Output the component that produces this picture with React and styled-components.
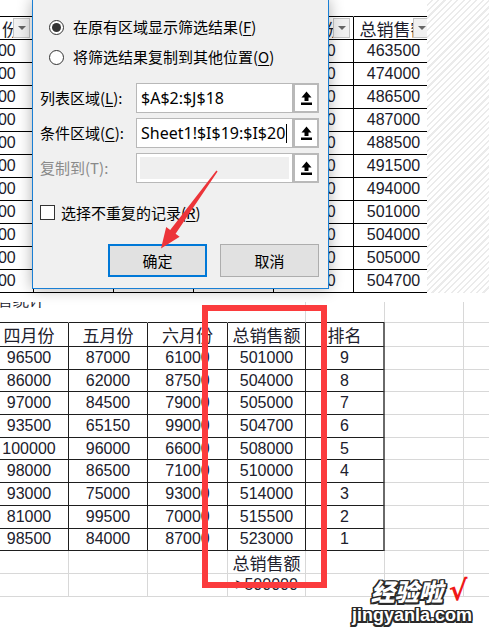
import React from "react";
import styled, { createGlobalStyle } from "styled-components";

const GlobalStyle = createGlobalStyle`
  *, *::before, *::after { box-sizing: border-box; }
  html, body { margin: 0; padding: 0; background: #fff; }
  body {
    font-family: "Liberation Sans", "Noto Sans CJK SC", sans-serif;
    overflow: hidden;
  }
`;

const DARK = "#1e1e1e";
const LIGHT = "#d8d8d8";

const Page = styled.div`
  position: relative;
  width: 489px;
  height: 631px;
  overflow: hidden;
  background: #fff;
`;

/* ---------- upper screenshot: sheet + advanced filter dialog ---------- */

const TopShot = styled.div`
  position: relative;
  display: flex;
  height: 293px;
`;

const SheetClip = styled.div`
  width: 427px;
  flex-shrink: 0;
  overflow: hidden;
`;

const TopGrid = styled.div`
  display: grid;
  grid-template-columns: repeat(6, 80px);
  grid-template-rows: 17px repeat(12, 23px);
  width: 480px;
  margin-left: -46px;
`;

const TopCell = styled.div`
  position: relative;
  display: flex;
  align-items: center;
  justify-content: center;
  border-bottom: 1px solid #000;
  border-right: 1px solid ${(p) => (p.$blank ? "transparent" : "#000")};
  font-size: ${(p) => (p.$cjk ? "17px" : "16px")};
  font-family: ${(p) =>
    p.$cjk ? '"Noto Sans CJK SC", sans-serif' : '"Liberation Sans", sans-serif'};
  color: #1a1a2a;
  white-space: nowrap;
`;

const FilterBtn = styled.span`
  position: absolute;
  right: 3px;
  top: 1px;
  width: 17px;
  height: 20px;
  background: #f1f1f1;
  border: 1px solid #c4c4c4;
  display: flex;
  align-items: center;
  justify-content: center;
  &::after {
    content: "";
    border-left: 4px solid transparent;
    border-right: 4px solid transparent;
    border-top: 4px solid #666;
  }
`;

const Hatch = styled.div`
  flex: 1;
  background: repeating-linear-gradient(
    135deg,
    #ffffff 0px,
    #ffffff 3px,
    #ebebeb 3px,
    #ebebeb 4.5px
  );
`;

const Dialog = styled.div`
  position: absolute;
  left: 32px;
  top: 0;
  width: 297px;
  height: 289px;
  display: flex;
  flex-direction: column;
  padding: 12px 9px 0 7px;
  background: #f0f0f0;
  border: 1px solid #1a7fd4;
  border-top: none;
  box-shadow: 0 0 14px rgba(0, 0, 0, 0.32);
  font-family: "Noto Sans CJK SC", sans-serif;
  font-size: 15px;
  color: #000;
`;

const Options = styled.div`
  display: flex;
  flex-direction: column;
  padding-left: 9px;
`;

const OptionRow = styled.div`
  display: flex;
  align-items: center;
  gap: 9px;
  height: 30px;
  line-height: 20px;
`;

const Radio = styled.span`
  width: 15px;
  height: 15px;
  border-radius: 50%;
  border: 1px solid #333;
  background: #fff;
  display: flex;
  align-items: center;
  justify-content: center;
  &::after {
    content: "";
    width: 9px;
    height: 9px;
    border-radius: 50%;
    background: ${(p) => (p.$on ? "#333" : "transparent")};
  }
`;

const Key = styled.span`
  text-decoration: underline;
  text-underline-offset: 2px;
`;

const Fields = styled.div`
  display: flex;
  flex-direction: column;
  gap: 5px;
  margin-top: 11px;
`;

const FieldRow = styled.div`
  display: flex;
  align-items: stretch;
  height: 30px;
`;

const FieldLabel = styled.div`
  width: 96px;
  display: flex;
  align-items: center;
  line-height: 20px;
  color: ${(p) => (p.$off ? "#8a8a8a" : "#000")};
`;

const Input = styled.div`
  flex: 1;
  display: flex;
  align-items: center;
  padding-left: 4px;
  border: 1px solid #b8b8b8;
  background: ${(p) => (p.$off ? "#efefef" : "#fff")};
  box-shadow: ${(p) => (p.$off ? "inset 0 0 0 3px #fff" : "none")};
  font-family: "Noto Sans", sans-serif;
  font-size: 16px;
  line-height: 20px;
  white-space: nowrap;
`;

const Caret = styled.span`
  width: 1px;
  height: 19px;
  margin-left: 1px;
  background: #000;
`;

const Picker = styled.div`
  width: 26px;
  display: flex;
  align-items: center;
  justify-content: center;
  background: #fff;
  border: 2px solid #b9b9b9;
`;

const CheckRow = styled.div`
  display: flex;
  align-items: center;
  gap: 6px;
  height: 15px;
  margin-top: 22px;
  line-height: 15px;
`;

const CheckBox = styled.span`
  width: 15px;
  height: 15px;
  border: 1px solid #333;
  background: #fff;
`;

const Buttons = styled.div`
  display: flex;
  justify-content: flex-end;
  gap: 13px;
  margin-top: 24px;
`;

const Button = styled.div`
  width: 99px;
  height: 33px;
  display: flex;
  align-items: center;
  justify-content: center;
  background: #e1e1e1;
  border: ${(p) => (p.$primary ? "2px solid #0078d7" : "1px solid #adadad")};
`;

const ArrowLayer = styled.svg`
  position: absolute;
  left: 0;
  top: 0;
  pointer-events: none;
`;

/* ---------- lower screenshot: result table ---------- */

const BottomShot = styled.div`
  padding-top: 9px;
`;

const BottomGrid = styled.div`
  display: grid;
  grid-template-columns: 79px 79px 80px 78px 79px 79px 79px;
  grid-template-rows: 21px 24px repeat(11, 22.7px);
  margin-left: -10px;
`;

const Cell = styled.div`
  display: flex;
  align-items: center;
  justify-content: center;
  border-bottom: 1px solid ${(p) => p.$b};
  border-right: ${(p) => p.$rw || 1}px solid ${(p) => p.$r};
  font-size: ${(p) => (p.$cjk ? "17px" : "16px")};
  font-family: ${(p) =>
    p.$cjk ? '"Noto Sans CJK SC", sans-serif' : '"Liberation Sans", sans-serif'};
  color: #20202c;
  white-space: nowrap;
  overflow: hidden;
`;

const TitleCell = styled(Cell)`
  align-items: flex-start;
  justify-content: flex-start;
  overflow: hidden;
  font-size: 16px;
`;

const TitleText = styled.span`
  line-height: 16px;
  margin-top: -9px;
  margin-left: -9px;
`;

const RedFrame = styled.div`
  position: absolute;
  left: 202px;
  top: 305px;
  width: 125px;
  height: 283px;
  border: 6px solid #fb3b3d;
  pointer-events: none;
`;

const Watermark = styled.div`
  position: absolute;
  left: 348px;
  top: 577px;
  width: 128px;
  display: flex;
  flex-direction: column;
  align-items: center;
`;

const outline =
  "-1.5px -1.5px 0 #2a2a2a, 1.5px -1.5px 0 #2a2a2a, -1.5px 1.5px 0 #2a2a2a, 1.5px 1.5px 0 #2a2a2a, 0 1.5px 0 #2a2a2a, 0 -1.5px 0 #2a2a2a, 1.5px 0 0 #2a2a2a, -1.5px 0 0 #2a2a2a";

const WmTop = styled.div`
  display: flex;
  align-items: center;
  gap: 6px;
  margin-left: 14px;
`;

const WmTitle = styled.span`
  font-family: "Noto Sans CJK SC", sans-serif;
  font-weight: 900;
  font-style: italic;
  font-size: 24px;
  line-height: 28px;
  color: #fff;
  text-shadow: ${outline};
`;

const WmCheck = styled.span`
  font-family: "DejaVu Sans", sans-serif;
  font-weight: bold;
  font-size: 28px;
  line-height: 28px;
  color: #f01818;
`;

const WmSite = styled.span`
  font-family: "Liberation Sans", sans-serif;
  font-weight: bold;
  font-size: 18px;
  line-height: 20px;
  color: #fff;
  text-shadow: ${outline};
`;

/* ---------- data ---------- */

const topHead = ["二月份", "三月份", "四月份", "五月份", "六月份", "总销售额"];
const topRows = [
  [78500, 91000, 80500, 72000, 63000, 463500],
  [82000, 76500, 85000, 69500, 81000, 474000],
  [90500, 88000, 74000, 91000, 65000, 486500],
  [86500, 79000, 92500, 63000, 84000, 487000],
  [75000, 93500, 81000, 88500, 72500, 488500],
  [92000, 84000, 76500, 90000, 68000, 491500],
  [83000, 87500, 89000, 77500, 79000, 494000],
  [96500, 82000, 96500, 87000, 61000, 501000],
  [86000, 95000, 86000, 62000, 87500, 504000],
  [97000, 78500, 97000, 84500, 79000, 505000],
  [93500, 80000, 93500, 65150, 99000, 504700],
];

const bottomHead = ["四月份", "五月份", "六月份", "总销售额", "排名"];
const bottomRows = [
  [96500, 87000, 61000, 501000, 9],
  [86000, 62000, 87500, 504000, 8],
  [97000, 84500, 79000, 505000, 7],
  [93500, 65150, 99000, 504700, 6],
  [100000, 96000, 66000, 508000, 5],
  [98000, 86500, 71000, 510000, 4],
  [93000, 75000, 93000, 514000, 3],
  [81000, 99500, 70000, 515500, 2],
  [98500, 84000, 87000, 523000, 1],
];

function borders(r, c) {
  if (r === 0) return { $b: c <= 4 ? DARK : LIGHT, $r: c >= 3 ? LIGHT : "transparent" };
  if (r <= 10)
    return {
      $b: c <= 4 ? DARK : LIGHT,
      $r: c <= 3 ? DARK : c === 4 ? "#6a6a6a" : LIGHT,
      $rw: c === 4 ? 2 : 1,
    };
  return { $b: LIGHT, $r: LIGHT };
}

function bottomText(r, c) {
  if (r === 1) return bottomHead[c] || "";
  if (r >= 2 && r <= 10) return bottomRows[r - 2][c] ?? "";
  if (r === 11 && c === 3) return "总销售额";
  if (r === 12 && c === 3) return ">500000";
  return "";
}

const PickIcon = () => (
  <svg width="11" height="14" viewBox="0 0 11 14">
    <path d="M5.5 0.5 L10.5 6.5 L7.5 6.5 L7.5 10 L3.5 10 L3.5 6.5 L0.5 6.5 Z" fill="#000" />
    <rect x="0" y="11.5" width="11" height="2.5" fill="#000" />
  </svg>
);

const App = () => {
  const topCells = [];
  for (let r = 0; r < 13; r++) {
    for (let c = 0; c < 6; c++) {
      if (r === 0) {
        topCells.push(<TopCell key={`t${r}${c}`} $blank />);
      } else if (r === 1) {
        topCells.push(
          <TopCell key={`t${r}${c}`} $cjk>
            {topHead[c]}
            <FilterBtn />
          </TopCell>
        );
      } else {
        topCells.push(<TopCell key={`t${r}${c}`}>{topRows[r - 2][c]}</TopCell>);
      }
    }
  }

  const cells = [];
  for (let r = 0; r < 13; r++) {
    for (let c = 0; c < 7; c++) {
      const b = borders(r, c);
      if (r === 0 && c === 0) {
        cells.push(
          <TitleCell key={`b${r}${c}`} {...b}>
            <TitleText>销售统计</TitleText>
          </TitleCell>
        );
        continue;
      }
      const text = bottomText(r, c);
      cells.push(
        <Cell key={`b${r}${c}`} {...b} $cjk={typeof text === "string" && /[\u4e00-\u9fff]/.test(text)}>
          {text}
        </Cell>
      );
    }
  }

  return (
    <Page>
      <GlobalStyle />
      <TopShot>
        <SheetClip>
          <TopGrid>{topCells}</TopGrid>
        </SheetClip>
        <Hatch />

        <Dialog>
          <Options>
            <OptionRow>
              <Radio $on />
              <span>
                在原有区域显示筛选结果(<Key>F</Key>)
              </span>
            </OptionRow>
            <OptionRow>
              <Radio />
              <span>
                将筛选结果复制到其他位置(<Key>O</Key>)
              </span>
            </OptionRow>
          </Options>

          <Fields>
            <FieldRow>
              <FieldLabel>
                列表区域(<Key>L</Key>):
              </FieldLabel>
              <Input>$A$2:$J$18</Input>
              <Picker>
                <PickIcon />
              </Picker>
            </FieldRow>
            <FieldRow>
              <FieldLabel>
                条件区域(<Key>C</Key>):
              </FieldLabel>
              <Input>
                Sheet1!$I$19:$I$20
                <Caret />
              </Input>
              <Picker>
                <PickIcon />
              </Picker>
            </FieldRow>
            <FieldRow>
              <FieldLabel $off>复制到(T):</FieldLabel>
              <Input $off />
              <Picker>
                <PickIcon />
              </Picker>
            </FieldRow>
          </Fields>

          <CheckRow>
            <CheckBox />
            <span>
              选择不重复的记录(<Key>R</Key>)
            </span>
          </CheckRow>

          <Buttons>
            <Button $primary>确定</Button>
            <Button>取消</Button>
          </Buttons>
        </Dialog>

        <ArrowLayer width="489" height="293" viewBox="0 0 489 293">
          <polygon
            points="217.6,171.4 175.6,233.8 179.6,236.8 161,248.5 166.2,227 170.2,229.9 216.4,170.6"
            fill="#ec3439"
          />
        </ArrowLayer>
      </TopShot>

      <BottomShot>
        <BottomGrid>{cells}</BottomGrid>
      </BottomShot>

      <RedFrame />

      <Watermark>
        <WmTop>
          <WmTitle>经验啦</WmTitle>
          <WmCheck>√</WmCheck>
        </WmTop>
        <WmSite>jingyanla.com</WmSite>
      </Watermark>
    </Page>
  );
};

export default App;
